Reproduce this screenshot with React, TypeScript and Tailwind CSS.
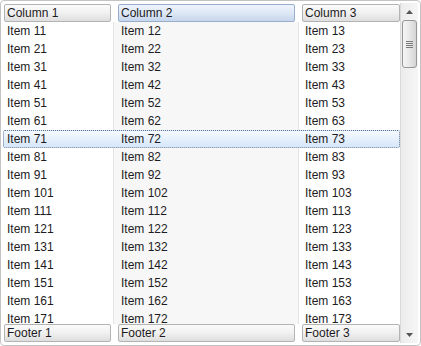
import React from 'react';

const rows = Array.from({ length: 17 }, (_, i) => i + 1);
const selected = 7;

const GripLines = () => (
  <div className="flex flex-col gap-[1px]">
    {[0, 1, 2, 3].map((i) => (
      <div key={i} className="h-[1px] w-[7px] bg-[#7b7b7b]" />
    ))}
  </div>
);

const Arrow = ({ down }: { down?: boolean }) => (
  <svg width="7" height="4" viewBox="0 0 7 4">
    <path d={down ? 'M0 0 L7 0 L3.5 4 Z' : 'M0 4 L7 4 L3.5 0 Z'} fill="#555" />
  </svg>
);

const headerCls =
  'h-full rounded-[2px] border border-[#b3b3b3] bg-gradient-to-b from-[#fbfbfb] via-[#f0f0f0] to-[#dedede] pl-[2px] leading-[16px]';

const Cells = ({ a, b, c }: { a: string; b: string; c: string }) => (
  <>
    <div className="ml-[1px] mr-[3px]">
      <div className={headerCls}>{a}</div>
    </div>
    <div className="ml-[4px] mr-[4px]">
      <div className={headerCls}>{b}</div>
    </div>
    <div className="ml-[3px]">
      <div className={headerCls}>{c}</div>
    </div>
  </>
);

export default function App() {
  return (
    <div className="h-[346px] w-[421px] bg-white font-['Liberation_Sans',Arial,sans-serif] text-[12px] text-[#1d1b22]">
      <div className="flex h-full rounded-[4px] border border-[#c3c3c3] p-[2px]">
        <div className="flex min-w-0 flex-1 flex-col">
          {/* headers */}
          <div className="grid h-[19px] grid-cols-[111px_185px_101px] pt-[1px]">
            <div className="ml-[1px] mr-[3px]">
              <div className={headerCls}>Column 1</div>
            </div>
            <div className="ml-[4px] mr-[4px]">
              <div className="h-full rounded-[2px] border border-[#98aecb] bg-gradient-to-b from-[#eef4fc] via-[#dde7f5] to-[#c6d6ec] pl-[2px] leading-[16px]">
                Column 2
              </div>
            </div>
            <div className="ml-[3px]">
              <div className={headerCls}>Column 3</div>
            </div>
          </div>

          {/* body */}
          <div className="min-h-0 flex-1 overflow-hidden">
            {rows.map((r) =>
              r === selected ? (
                <div
                  key={r}
                  className="grid h-[18px] grid-cols-[111px_185px_101px] rounded-[2px] border border-dotted border-[#5f7593] bg-gradient-to-b from-[#f6faff] to-[#d6e6fa] leading-[16px]"
                >
                  <div className="pl-[3px]">Item {r}1</div>
                  <div className="pl-[6px]">Item {r}2</div>
                  <div className="pl-[5px]">Item {r}3</div>
                </div>
              ) : (
                <div key={r} className="grid h-[18px] grid-cols-[111px_185px_101px] leading-[18px]">
                  <div className="border-r border-[#e4e4e4] pl-[4px]">Item {r}1</div>
                  <div className="border-r border-[#e4e4e4] bg-[#f7f7f7] pl-[7px]">Item {r}2</div>
                  <div className="pl-[6px]">Item {r}3</div>
                </div>
              )
            )}
          </div>

          {/* footers */}
          <div className="grid h-[19px] grid-cols-[111px_185px_101px] pb-[1px]">
            <Cells a="Footer 1" b="Footer 2" c="Footer 3" />
          </div>
        </div>

        {/* scrollbar */}
        <div className="flex w-[18px] flex-col border-l border-[#dadada] bg-gradient-to-r from-[#ececec] to-[#f6f6f6]">
          <div className="flex h-[17px] items-center justify-center">
            <Arrow />
          </div>
          <div className="mx-[1px] flex h-[48px] items-center justify-center rounded-[3px] border border-[#979797] bg-gradient-to-r from-[#f4f4f4] via-[#e8e8e8] to-[#d4d4d4]">
            <GripLines />
          </div>
          <div className="flex-1" />
          <div className="flex h-[17px] items-center justify-center">
            <Arrow down />
          </div>
        </div>
      </div>
    </div>
  );
}
